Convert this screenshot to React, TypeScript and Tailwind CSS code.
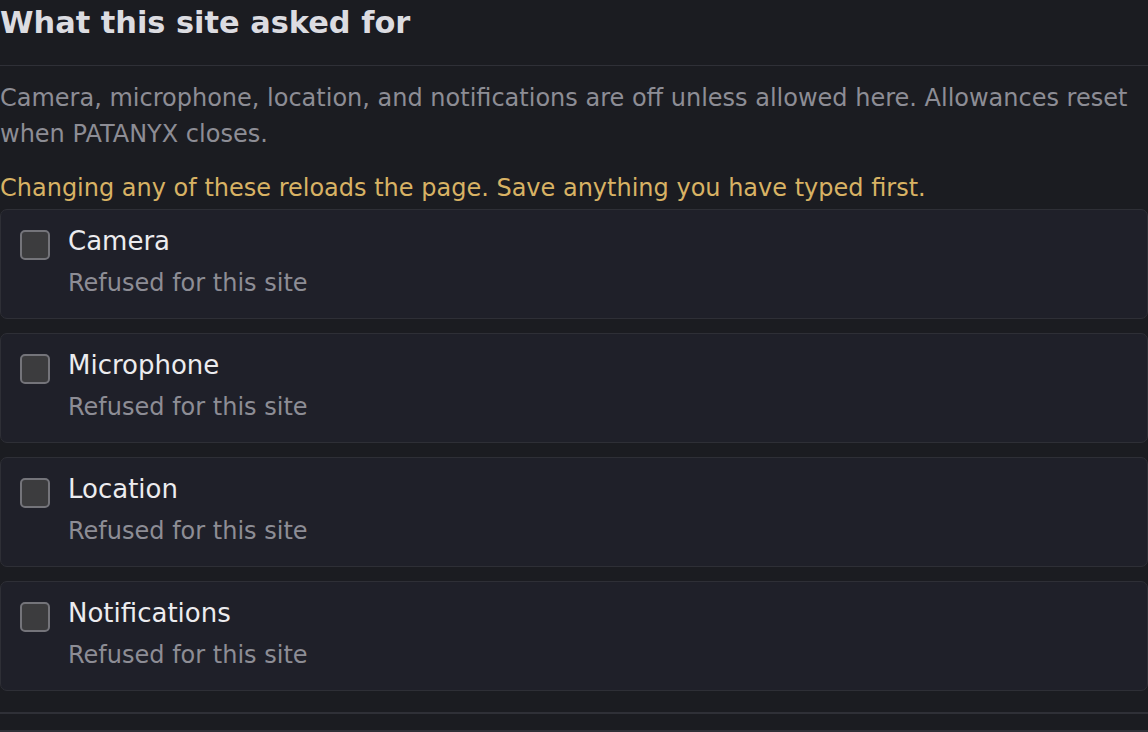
import React from 'react';

const items = ['Camera', 'Microphone', 'Location', 'Notifications'];

function PermissionRow({ name }: { name: string }) {
  return (
    <label className="flex items-start gap-[18px] rounded-[7px] border border-[#2e2f36] bg-[#1f2029] pt-[15px] pb-[17px] px-[19px]">
      <span className="mt-[5px] h-[30px] w-[30px] shrink-0 rounded-[5px] border-2 border-[#74747a] bg-[#3c3c3e]" />
      <span className="flex flex-col">
        <span className="text-[26px] leading-[32px] text-[#ececef]">{name}</span>
        <span className="mt-[8px] text-[24px] leading-[36px] text-[#8d8d95]">Refused for this site</span>
      </span>
    </label>
  );
}

export default function App() {
  return (
    <div
      className="h-[732px] w-[1148px] overflow-hidden bg-[#1b1c21]"
      style={{ fontFamily: '"DejaVu Sans", Verdana, sans-serif' }}
    >
      <div className="border-b border-[#2f3037] pb-[20px]">
        <h2 className="text-[30.4px] font-bold leading-[45px] text-[#dcdce1]">What this site asked for</h2>
      </div>
      <p className="mt-[14px] text-[24px] leading-[36px] text-[#8d8d95]">
        Camera, microphone, location, and notifications are off unless allowed here. Allowances reset when PATANYX closes.
      </p>
      <p className="mt-[18px] mb-[3px] text-[24px] leading-[36px] text-[#d8b264]">
        Changing any of these reloads the page. Save anything you have typed first.
      </p>
      <div className="flex flex-col gap-[14px]">
        {items.map((n) => (
          <PermissionRow key={n} name={n} />
        ))}
      </div>
      <div className="mt-[21px] h-[18px] border-t-2 border-[#2f3037]" />
      <div className="border-t-2 border-[#2f3037]" />
    </div>
  );
}
